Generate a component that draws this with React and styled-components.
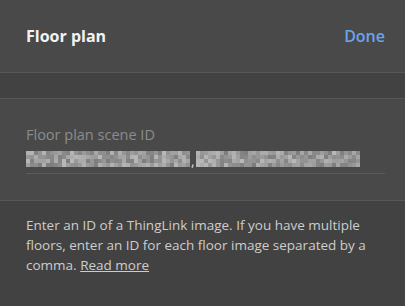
import React from "react";
import styled, { createGlobalStyle } from "styled-components";

const GlobalStyle = createGlobalStyle`
  html, body {
    margin: 0;
    padding: 0;
    background: #424242;
  }
  body {
    font-family: "Open Sans", "Noto Sans", sans-serif;
  }
`;

// deterministic gray blocks standing in for the obscured scene IDs
const makeMosaic = (cols, seed) => {
  const cells = [];
  let s = seed;
  for (let r = 0; r < 4; r++) {
    for (let c = 0; c < cols; c++) {
      s = (s * 9301 + 49297) % 233280;
      const v = 125 + Math.floor((s / 233280) * 60);
      cells.push({ x: c * 4, y: r * 4, v });
    }
  }
  return cells;
};

const Mosaic = ({ cols, seed }) => (
  <svg width={cols * 4} height={16} style={{ display: "block" }}>
    {makeMosaic(cols, seed).map((cell, i) => (
      <rect
        key={i}
        x={cell.x}
        y={cell.y}
        width={4}
        height={4}
        fill={`rgb(${cell.v},${cell.v},${cell.v})`}
      />
    ))}
  </svg>
);

const App = () => {
  return (
    <>
      <GlobalStyle />
      <Panel>
        <Header>
          <Title>Floor plan</Title>
          <DoneButton>Done</DoneButton>
        </Header>
        <Band />
        <Section>
          <Label>Floor plan scene ID</Label>
          <Field>
            <Mosaic cols={41} seed={17} />
            <Comma>,</Comma>
            <Mosaic cols={41} seed={93} />
          </Field>
        </Section>
        <Help>
          Enter an ID of a ThingLink image. If you have multiple floors, enter
          an ID for each floor image separated by a comma.{" "}
          <ReadMore href="#">Read more</ReadMore>
        </Help>
      </Panel>
    </>
  );
};

export default App;

const Panel = styled.div`
  width: 405px;
  height: 306px;
  display: flex;
  flex-direction: column;
  background: #424242;
  overflow: hidden;
`;
const Header = styled.div`
  height: 73px;
  box-sizing: border-box;
  display: flex;
  align-items: center;
  justify-content: space-between;
  padding: 0 20px 0 26px;
  background: #494949;
  border-bottom: 1px solid #575757;
`;
const Title = styled.h2`
  margin: 0;
  font-size: 16px;
  font-weight: 700;
  color: #f2f2f2;
`;
const DoneButton = styled.button`
  border: none;
  background: none;
  padding: 0;
  font-family: inherit;
  font-size: 16px;
  font-weight: 600;
  color: #69a5ec;
  cursor: pointer;
`;
const Band = styled.div`
  height: 25px;
  background: #424242;
  border-bottom: 1px solid #575757;
`;
const Section = styled.div`
  height: 102px;
  box-sizing: border-box;
  padding: 27px 20px 0 26px;
  background: #494949;
  border-bottom: 1px solid #575757;
`;
const Label = styled.div`
  font-size: 14.5px;
  color: #8c8c8c;
  line-height: 18px;
`;
const Field = styled.div`
  display: flex;
  align-items: center;
  height: 24px;
  margin-top: 3px;
  border-bottom: 1px solid #5c5c5c;
  padding-bottom: 2px;
`;
const Comma = styled.span`
  font-size: 14px;
  color: #d8d8d8;
  margin: 2px 1px 0 1px;
`;
const Help = styled.p`
  margin: 0;
  padding: 14px 30px 0 26px;
  font-size: 13.5px;
  line-height: 20px;
  color: #cdcdcd;
`;
const ReadMore = styled.a`
  color: #cdcdcd;
  text-decoration: underline;
`;
